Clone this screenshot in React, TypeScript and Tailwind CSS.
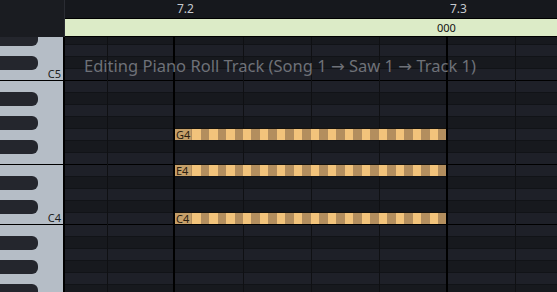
import React from 'react';

const ROWS = ['D#5','D5','C#5','C5','B4','A#4','A4','G#4','G4','F#4','F4','E4','D#4','D4','C#4','C4','B3','A#3','A3','G#3','G3','F#3'];

const NOTES = [
  { label: 'G4', top: 96 },
  { label: 'E4', top: 132 },
  { label: 'C4', top: 180 },
];

const stripe = {
  backgroundImage:
    'repeating-linear-gradient(90deg, #f2c37b 0px, #f2c37b 8.5px, #b38e5e 8.5px, #b38e5e 17px)',
};

function Arrow() {
  return <span style={{ fontFamily: '"DejaVu Sans", sans-serif' }}>→</span>;
}

export default function App() {
  return (
    <div className="w-[557px] h-[292px] overflow-hidden bg-[#16181d] flex flex-col" style={{ fontFamily: '"Noto Sans", sans-serif' }}>
      {/* top header */}
      <div className="flex h-[37px] shrink-0">
        <div className="w-[65px] bg-[#1a1c21] border-r border-[#2a2c33]" />
        <div className="flex-1 flex flex-col relative">
          <div className="h-[19px] bg-[#16181d] border-b border-black relative">
            <span className="absolute left-[112px] top-[1px] text-[12px] leading-[16px] text-[#c5c9cf]">7.2</span>
            <span className="absolute left-[385px] top-[1px] text-[12px] leading-[16px] text-[#c5c9cf]">7.3</span>
          </div>
          <div className="h-[18px] bg-[#dcebc7] border-b border-black relative">
            <span className="absolute left-[372px] top-[1px] text-[11px] leading-[15px] text-[#111]">000</span>
          </div>
        </div>
      </div>

      {/* body */}
      <div className="flex flex-1 overflow-hidden">
        {/* piano */}
        <div className="w-[65px] shrink-0 border-r-2 border-black overflow-hidden">
          <div className="-mt-[5px] flex flex-col">
            {ROWS.map((r) => {
              const black = r.includes('#');
              const strong = r.startsWith('B') || r.startsWith('E');
              const isC = r.startsWith('C') && !black;
              return (
                <div
                  key={r}
                  className={`relative h-[12px] bg-[#b5bdc6] ${strong ? 'border-t border-black' : ''}`}
                >
                  {black && (
                    <div className="absolute left-0 top-0 w-[38px] h-[14px] bg-[#24262d] rounded-r-[6px] z-10" />
                  )}
                  {isC && (
                    <span className="absolute right-[2px] bottom-[0px] text-[11px] leading-[12px] text-[#1c1e22]">{r}</span>
                  )}
                </div>
              );
            })}
          </div>
        </div>

        {/* grid */}
        <div className="flex-1 relative overflow-hidden">
          <div className="-mt-[5px] flex flex-col">
            {ROWS.map((r) => {
              const black = r.includes('#');
              const strong = r.startsWith('B') || r.startsWith('E');
              return (
                <div
                  key={r}
                  className={`h-[12px] border-t ${strong ? 'border-black' : 'border-[#111317]'} ${black ? 'bg-[#17191e]' : 'bg-[#1e2028]'}`}
                />
              );
            })}
          </div>

          {/* beat lines */}
          {[42, 178, 246, 314, 450].map((x) => (
            <div key={x} className="absolute top-0 bottom-0 w-px bg-[#0f1013]" style={{ left: x }} />
          ))}
          {/* bar lines */}
          {[108, 381].map((x) => (
            <div key={x} className="absolute top-0 bottom-0 w-[2px] bg-black" style={{ left: x }} />
          ))}

          {/* notes */}
          {NOTES.map((n) => (
            <div
              key={n.label}
              className="absolute left-[110px] w-[271px] h-[12px] border-t border-[#15120d] flex"
              style={{ top: n.top - 5, ...stripe }}
            >
              <div className="w-[16px] h-full bg-[#c59f69] text-[11px] leading-[11px] text-[#2a2010] pl-[1px]">{n.label}</div>
            </div>
          ))}

          {/* overlay text */}
          <div className="absolute left-[19px] top-[18px] text-[16.5px] leading-[22px] text-[#6e7178] whitespace-nowrap">
            Editing Piano Roll Track (Song 1 <Arrow /> Saw 1 <Arrow /> Track 1)
          </div>
        </div>
      </div>
    </div>
  );
}
